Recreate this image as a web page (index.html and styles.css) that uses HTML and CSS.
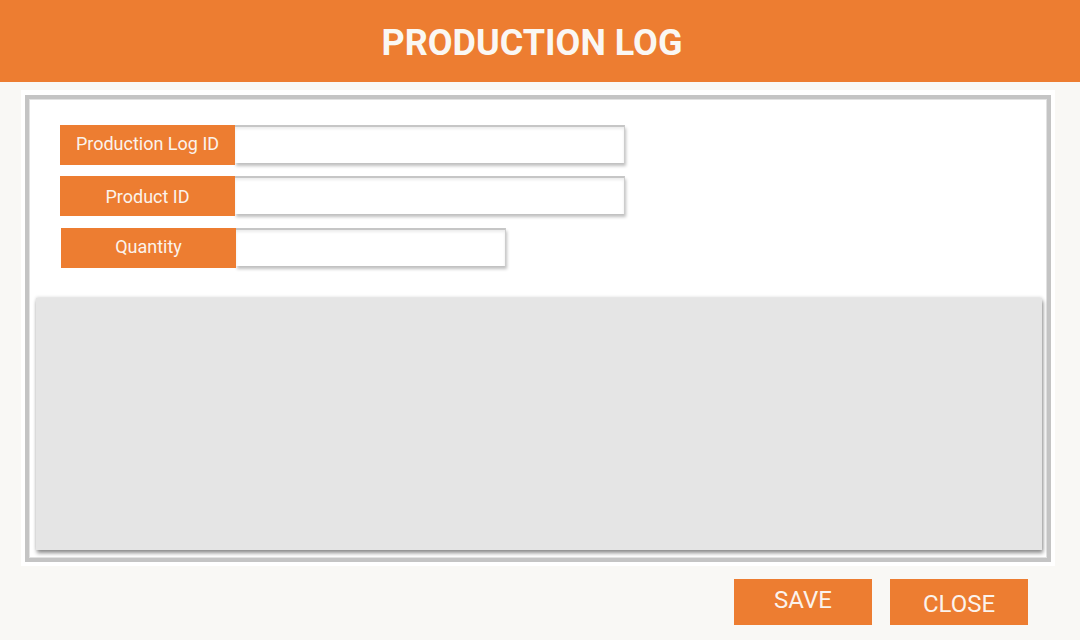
FILE: index.html
```html
<!DOCTYPE html>
<html>
<head>
<meta charset="utf-8">
<link rel="stylesheet" href="styles.css">
</head>
<body>
<header class="header"><h1 class="title">PRODUCTION LOG</h1></header>
<main class="panel">
  <div class="frame">
    <div class="fields">
      <div class="row"><div class="label">Production Log ID</div><div class="input wide"></div></div>
      <div class="row"><div class="label label-mid">Product ID</div><div class="input wide"></div></div>
      <div class="row row-q"><div class="label">Quantity</div><div class="input short"></div></div>
    </div>
    <div class="grid-area"></div>
  </div>
</main>
<footer class="actions">
  <button class="btn btn-save">SAVE</button>
  <button class="btn btn-close">CLOSE</button>
</footer>
</body>
</html>
```
FILE: styles.css
```css
* { box-sizing: border-box; }
html, body { margin: 0; padding: 0; }
body {
  width: 1080px;
  height: 640px;
  background: #f9f8f5;
  font-family: Roboto, "Liberation Sans", sans-serif;
  overflow: hidden;
}
.header {
  height: 82px;
  background: #ed7d31;
  display: flex;
  align-items: center;
  justify-content: center;
}
.title {
  margin: 3px 0 0 -16px;
  color: #faf7f3;
  font-size: 36px;
  font-weight: 700;
  letter-spacing: 0;
}
.panel {
  margin: 8px 25px 0 21px;
  height: 476px;
  background: #fff;
  padding: 5px 4px 4px 4px;
}
.frame {
  height: 467px;
  border: 4px solid #c4c4c4;
  box-shadow: inset 0 0 0 1px #e2e2e2;
  padding: 26px 5px 0 7px;
}
.fields {
  margin-left: 24px;
  display: flex;
  flex-direction: column;
}
.row { display: flex; height: 40px; margin-bottom: 11px; }
.row-q { margin-bottom: 0; margin-top: 1px; margin-left: 1px; }
.label {
  width: 175px;
  height: 40px;
  background: #ed7d31;
  color: #fbf3ec;
  font-size: 18px;
  padding-bottom: 3px;
  display: flex;
  align-items: center;
  justify-content: center;
  position: relative;
  z-index: 1;
}
.label-mid { padding-bottom: 0; }
.input {
  height: 38px;
  background: #fff;
  border-top: 2px solid #c6c6c6;
  border-right: 1px solid #cdcdcd;
  box-shadow: 1px 3px 3px rgba(0,0,0,0.25), inset 0 2px 3px rgba(0,0,0,0.08);
}
.wide { width: 390px; }
.short { width: 270px; }
.grid-area {
  margin-top: 30px;
  width: 1006px;
  height: 252px;
  background: #e5e5e5;
  box-shadow: 1px 3px 4px rgba(0,0,0,0.45), 0 -1px 3px rgba(0,0,0,0.12);
}
.actions {
  display: flex;
  justify-content: flex-end;
  gap: 18px;
  padding: 13px 52px 0 0;
}
.btn {
  width: 138px;
  height: 46px;
  border: none;
  background: #ed7d31;
  color: #fbf3ec;
  font-family: Roboto, "Liberation Sans", sans-serif;
  font-size: 24px;
  padding: 0;
}
.btn-save { padding-bottom: 4px; }
.btn-close { padding-top: 4px; }
```
